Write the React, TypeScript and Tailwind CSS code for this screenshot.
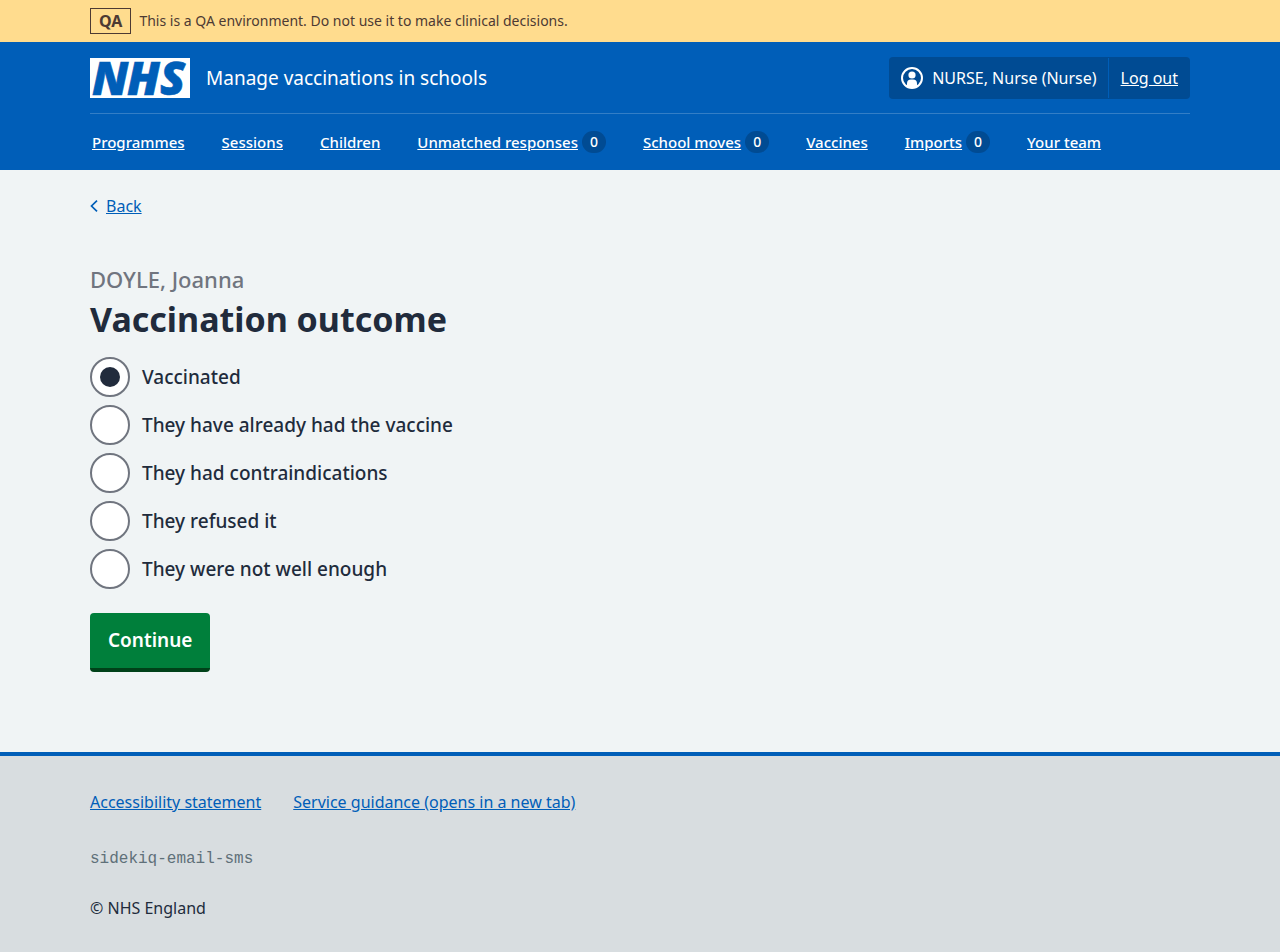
import { useState } from "react";

const NAV: { label: string; count?: number }[] = [
  { label: "Programmes" },
  { label: "Sessions" },
  { label: "Children" },
  { label: "Unmatched responses", count: 0 },
  { label: "School moves", count: 0 },
  { label: "Vaccines" },
  { label: "Imports", count: 0 },
  { label: "Your team" },
];

const OUTCOMES = [
  "Vaccinated",
  "They have already had the vaccine",
  "They had contraindications",
  "They refused it",
  "They were not well enough",
];

const CONTAINER = "mx-auto w-full max-w-[1164px] px-8";

function EnvironmentBanner() {
  return (
    <div className="bg-[#ffdc8e] py-2 text-[#4d3a33]">
      <div className={`${CONTAINER} flex items-center gap-2`}>
        <strong className="border border-[#4d3a33] px-2 text-base leading-6 font-bold">QA</strong>
        <span className="text-[14px] leading-6">
          This is a QA environment. Do not use it to make clinical decisions.
        </span>
      </div>
    </div>
  );
}

function Logo() {
  return (
    <svg className="h-10 w-[100px] shrink-0 overflow-visible" viewBox="0 0 100 40" role="img" aria-label="NHS">
      <rect width="100" height="40" fill="#fff" />
      <text
        x="2 37 70"
        y="36.5"
        fill="#005eb8"
        stroke="#005eb8"
        strokeWidth="0.6"
        fontFamily="'Open Sans', 'Noto Sans', sans-serif"
        fontSize="46"
        fontWeight="800"
        fontStyle="italic"
      >
        NHS
      </text>
    </svg>
  );
}

function UserIcon() {
  return (
    <svg className="size-6 shrink-0" viewBox="0 0 24 24" aria-hidden="true">
      <circle cx="12" cy="12" r="10" fill="none" stroke="#fff" strokeWidth="2" />
      <circle cx="12" cy="9" r="3.6" fill="#fff" />
      <path d="M7 20.5v-3a4 4 0 0 1 4-4h2a4 4 0 0 1 4 4v3A10 10 0 0 1 12 22a10 10 0 0 1-5-1.5Z" fill="#fff" />
    </svg>
  );
}

function Header() {
  return (
    <header className="bg-[#005eb8] text-white">
      <div className={CONTAINER}>
        <div className="flex flex-wrap items-center gap-4 border-b border-white/20 pt-[15px] pb-[14px]">
          <a href="#home" className="flex items-center gap-4">
            <Logo />
            <span className="text-[19px] leading-7">Manage vaccinations in schools</span>
          </a>
          <div className="ml-auto flex rounded bg-[#004b93] text-base leading-6">
            <div className="my-px flex items-center gap-2 border-r border-[#005eb8] px-[11px] py-2">
              <UserIcon />
              <span>NURSE, Nurse (Nurse)</span>
            </div>
            <a href="#logout" className="px-3 py-[9px] underline">
              Log out
            </a>
          </div>
        </div>
        <nav aria-label="Menu">
          <ul className="flex flex-wrap gap-x-[37px] pl-0.5">
            {NAV.map((item) => (
              <li key={item.label} className="flex items-center gap-1 py-4 text-[15px] leading-6 font-medium">
                <a href="#nav" className="underline">
                  {item.label}
                </a>
                {item.count !== undefined && (
                  <span className="flex h-[22px] w-6 items-center justify-center rounded-full bg-[#004b93] text-[14px]">
                    {item.count}
                  </span>
                )}
              </li>
            ))}
          </ul>
        </nav>
      </div>
    </header>
  );
}

function OutcomeForm() {
  const [selected, setSelected] = useState(OUTCOMES[0]);
  return (
    <form onSubmit={(event) => event.preventDefault()}>
      <fieldset>
        <legend>
          <span className="block text-[22px] leading-8 font-medium text-[#70757f]">DOYLE, Joanna</span>
          <h1 className="text-[34px] leading-12 font-bold">Vaccination outcome</h1>
        </legend>
        <div className="mt-[14px] flex flex-col gap-2">
          {OUTCOMES.map((outcome) => (
            <label key={outcome} className="flex items-center gap-3 self-start text-[19px] leading-7 font-medium">
              <input
                type="radio"
                name="outcome"
                checked={selected === outcome}
                onChange={() => setSelected(outcome)}
                className="grid size-10 shrink-0 appearance-none place-content-center rounded-full border-2 border-[#70757f] bg-white before:size-5 before:rounded-full checked:before:bg-[#212b3c]"
              />
              {outcome}
            </label>
          ))}
        </div>
      </fieldset>
      <button
        type="submit"
        className="mt-6 rounded border-b-4 border-[#004119] bg-[#007f3b] px-[18px] pt-[13px] pb-[14px] text-[19px] leading-7 font-semibold text-white"
      >
        Continue
      </button>
    </form>
  );
}

function Footer() {
  return (
    <footer className="grow border-t-4 border-[#005eb8] bg-[#d8dde0] pt-[34px] pb-6 text-base leading-6">
      <div className={CONTAINER}>
        <ul className="flex flex-wrap gap-x-8 text-[#005eb8]">
          <li>
            <a href="#accessibility" className="underline">Accessibility statement</a>
          </li>
          <li>
            <a href="#guidance" className="underline">Service guidance (opens in a new tab)</a>
          </li>
        </ul>
        <p className="mt-[33px] font-['Liberation_Mono',monospace] text-[#5f7079]">sidekiq-email-sms</p>
        <p className="mt-[25px]">© NHS England</p>
      </div>
    </footer>
  );
}

export default function App() {
  return (
    <div className="flex min-h-screen flex-col bg-[#f0f4f5] font-['Noto_Sans','Open_Sans',sans-serif] text-[#212b3c]">
      <EnvironmentBanner />
      <Header />
      <div className={`${CONTAINER} pt-6 pb-20`}>
        <a href="#back" className="inline-flex items-center gap-2 text-base leading-6 text-[#005eb8]">
          <svg className="h-3 w-2" viewBox="0 0 8 12" fill="none" stroke="currentColor" strokeWidth="1.7" aria-hidden="true">
            <path d="M7 .6 1.5 6 7 11.4" />
          </svg>
          <span className="underline">Back</span>
        </a>
        <main className="pt-[45px]">
          <OutcomeForm />
        </main>
      </div>
      <Footer />
    </div>
  );
}
